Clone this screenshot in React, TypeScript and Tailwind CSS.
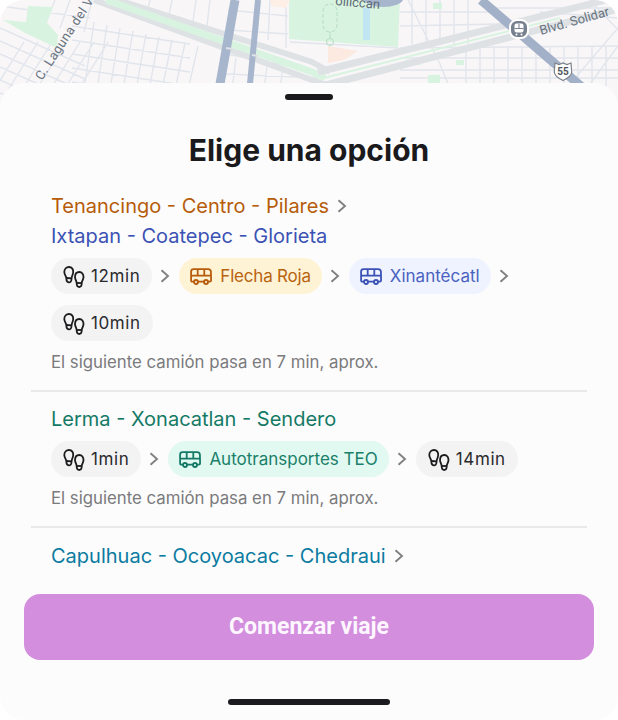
import React from "react";

const Foot = () => (
  <svg width="22" height="24" viewBox="0 0 22 24" fill="none" stroke="#1c1c1e" strokeWidth="1.800" className="shrink-0">
    <path d="M6 2c3 0 4.500 2.500 4.200 5.500-.2 2-1.400 3.500-1.600 5.500l-.2 2c-.2 1.600-1.300 2.500-2.700 2.300-1.300-.2-2.200-1.400-2.200-2.800l-.3-2C3 11 1.300 9.500 1.300 7 1.300 4 3.400 2 6 2Z" />
    <path d="M3.300 13l5.300.4" />
    <path d="M16.300 7c2.700 0 4.300 2.300 4.200 5.200-.1 2-1.400 3.300-1.700 5.300l-.2 2c-.2 1.500-1.100 2.500-2.400 2.500s-2.200-1-2.400-2.500l-.2-2c-.3-2-1.500-3.300-1.600-5.300C12 9.300 13.600 7 16.300 7Z" />
    <path d="M13.700 18h5.100" />
  </svg>
);

const Bus = ({ c, bg }: { c: string; bg: string }) => (
  <svg width="22" height="17" viewBox="0 0 22 17" fill="none" stroke={c} strokeWidth="1.800" strokeLinejoin="round" className="shrink-0">
    <path d="M3.500 1.200h14.700c1.500 0 2.500 1 2.700 2.400l.2 8.700c0 .8-.6 1.300-1.400 1.300H2.200c-.6 0-1.100-.5-1.100-1.100V3.700c0-1.400 1-2.500 2.400-2.500Z" />
    <path d="M1.200 7.700h19.800M7.700 1.300v6.400M14.300 1.300v6.400" />
    <circle cx="6" cy="14" r="2" fill={bg} />
    <circle cx="16" cy="14" r="2" fill={bg} />
  </svg>
);

const Chev = () => (
  <svg width="11" height="14" viewBox="0 0 11 14" fill="none" stroke="#808080" strokeWidth="1.900" className="shrink-0">
    <path d="M1.500 1.200L8 7l-6.500 5.800" />
  </svg>
);

const Walk = ({ t }: { t: string }) => (
  <span className="flex h-9 items-center gap-[6px] rounded-full bg-[#f3f3f4] pl-3 pr-3 pt-px text-[17px] tracking-[0.6px] text-[#2a2a2c]">
    <Foot />
    {t}
  </span>
);

const Route = ({ t, fg, bg, icon, track }: { t: string; fg: string; bg: string; icon: string; track: string }) => (
  <span className={`flex h-9 items-center gap-2 rounded-full px-[11px] pt-px text-[17px] ${track}`} style={{ color: fg, background: bg }}>
    <Bus c={icon} bg={bg} />
    {t}
  </span>
);

const thin: string[] = [];
// south-west diagonal grid
for (let i = 0; i < 6; i++) thin.push(`M0 ${28 + i * 13}L85 ${66 + i * 13}`);
for (let i = 0; i < 7; i++) thin.push(`M${i * 14 - 6} 90L${i * 14 + 24} 42`);
// left block grid
for (let i = 0; i < 9; i++) thin.push(`M${84 + i * 13} 90L${94 + i * 13} ${22 + i * 3}`);
for (let i = 0; i < 5; i++) thin.push(`M72 ${26 + i * 14}L${190} ${44 + i * 14}`);
// top-left
thin.push("M0 6L90 18", "M55 0L45 25", "M70 0L60 28", "M92 0L84 32", "M150 0L146 16", "M172 0L168 20", "M196 0L192 28", "M210 0L206 34");
// centre blocks
for (let i = 0; i < 4; i++) thin.push(`M${232 + i * 16} 90L${236 + i * 16} 58`);
thin.push("M226 54L290 66", "M226 74L320 78", "M228 10L288 16", "M228 30L288 34", "M270 0L268 40", "M286 0L286 48");
// upper middle-right
for (let i = 0; i < 5; i++) thin.push(`M${412 + i * 14} 0L${412 + i * 14} 44`);
thin.push("M400 12L490 12", "M400 26L500 24", "M408 0L440 64", "M440 64L448 84", "M490 8L618 8");
// lower right grid
for (let i = 0; i < 11; i++) thin.push(`M${466 + i * 14} 46L${466 + i * 14} 90`);
thin.push("M400 48L618 46", "M400 58L618 58", "M400 70L618 70", "M400 78L618 78");
thin.push("M618 28L570 84", "M618 46L590 84", "M540 12L618 18", "M590 0L618 30");

function MapView() {
  return (
    <div className="h-[110px] w-full overflow-hidden">
      <svg width="618" height="110" viewBox="0 0 618 110" className="block" fontFamily="Roboto, sans-serif">
        <rect width="618" height="110" fill="#f9f6f8" />
        <path d={thin.join("")} stroke="#e1e5ec" strokeWidth="1.400" fill="none" />
        <path d="M28 6L53 7L47 23L58 35L57 48L25 33L3 20L26 22Z" fill="#d9f3e1" />
        <path d="M289 0H400L398 47L289 39Z" fill="#d9f3e1" />
        <path d="M433 3H442V9H433ZM405 60H421V65H405ZM456 60H464V65H456ZM428 75H440V84H428Z" fill="#d9f3e1" />
        <path d="M270 0H290L286 8L272 6Z" fill="#fdeee6" />
        <path d="M363 8H370V40H363Z" fill="#bfe6f2" />
        <path d="M328 46L358 51L344 60L328 63Z" fill="#fce9df" />
        <path d="M290 42L398 48" stroke="#e1e5ec" strokeWidth="1.400" />
        <rect x="323" y="4" width="14" height="28" rx="7" fill="none" stroke="#b5dcc0" strokeDasharray="4 2" />
        <path d="M330 32V38" stroke="#b5dcc0" />
        <circle cx="330" cy="42" r="3.500" fill="none" stroke="#b5dcc0" />
        <path d="M118 0L312 62L330 72" stroke="#dee2e5" strokeWidth="6" fill="none" />
        <path d="M94 0L312 80L330 86" stroke="#dee2e5" strokeWidth="6" fill="none" />
        <path d="M106 0L312 72L325 78" stroke="#d9f3e1" strokeWidth="7" fill="none" />
        <path d="M318 72L630 -6" stroke="#dee2e5" strokeWidth="7" fill="none" />
        <path d="M322 86L630 6" stroke="#dee2e5" strokeWidth="7" fill="none" />
        <path d="M320 79L560 18" stroke="#d9f3e1" strokeWidth="2" fill="none" />
        <path d="M235 0L220 84" stroke="#a7b6cd" strokeWidth="9" fill="none" />
        <path d="M258 0L250 84" stroke="#a7b6cd" strokeWidth="6" fill="none" />
        <path d="M226 48L232 49M252 55L258 56" stroke="#dee2e5" strokeWidth="2" />
        <path d="M481 0L583 88" stroke="#a3b1c8" strokeWidth="9" fill="none" />
        <path d="M364 0A20 9 0 0 0 403 0Z" fill="#a7b6cd" />
        <text x="335" y="5" fontSize="13" fill="#5f6b76" transform="rotate(5 335 5)">olilccan</text>
        <text x="42" y="81" fontSize="13" fill="#69747f" letterSpacing=".4" transform="rotate(-57 42 81)">C. Laguna del Vo</text>
        <text x="541" y="35" fontSize="13" fill="#69747f" transform="rotate(-16 541 35)">Blvd. Solidar</text>
        <rect x="510" y="20" width="18" height="18" rx="7" fill="#76808e" stroke="#fff" strokeWidth="2" />
        <rect x="514.500" y="23.500" width="9" height="9" rx="2" fill="#fff" />
        <path d="M514.500 28.500H523.500M519 24V28.500" stroke="#76808e" />
        <circle cx="516.500" cy="34.500" r="1" fill="#fff" />
        <circle cx="521.500" cy="34.500" r="1" fill="#fff" />
        <path d="M555 63l4 1.500 4-1.500 4 1.500 4-1.500.7 9c0 4-4.700 6.500-8.700 8.500-4-2-8.700-4.500-8.700-8.500Z" fill="#fff" stroke="#7b828a" strokeWidth="1.200" />
        <text x="563" y="75" fontSize="10" textAnchor="middle" fontWeight="700" fill="#4e555d">55</text>
      </svg>
    </div>
  );
}

export default function App() {
  return (
    <div className="h-[720px] w-[618px] overflow-hidden bg-white font-['Inter',sans-serif]">
      <div className="flex h-full flex-col overflow-hidden rounded-[24px]">
        <MapView />
        <div className="-mt-[27px] flex flex-1 flex-col rounded-t-[24px] bg-[#fcfcfc]">
          <div className="mx-auto mt-[11px] h-[6px] w-[48px] rounded-full bg-[#1a1a1c]" />
          <h1 className="mt-[30px] text-center text-[30px] font-bold leading-[40px] text-[#1a1a1c]">Elige una opción</h1>
          <div className="mx-[31px] mt-[21px] flex flex-col">
            <div className="border-b-2 border-[#e9e9e9] px-5 pb-[18px]">
              <div className="flex h-[30px] items-center gap-[8px] text-[20px] text-[#b65c0a]">
                Tenancingo - Centro - Pilares <Chev />
              </div>
              <div className="flex h-[30px] items-center text-[20px] text-[#3b52b4]">Ixtapan - Coatepec - Glorieta</div>
              <div className="mt-[7px] flex flex-wrap items-center gap-x-[8px] gap-y-[11px]">
                <Walk t="12min" />
                <Chev />
                <Route t="Flecha Roja" fg="#b8640f" bg="#fff3d6" icon="#b65c0a" track="tracking-[-0.2px]" />
                <Chev />
                <Route t="Xinantécatl" fg="#4a62c0" bg="#eef3ff" icon="#3b52b4" track="tracking-[0px]" />
                <Chev />
                <Walk t="10min" />
              </div>
              <p className="mt-[11px] text-[16.800px] leading-[20px] text-[#7a7a7c]">El siguiente camión pasa en 7 min, aprox.</p>
            </div>
            <div className="border-b-2 border-[#e9e9e9] px-5 pb-[18px] pt-[12px]">
              <div className="flex h-[30px] items-center text-[20px] text-[#147a66]">Lerma - Xonacatlan - Sendero</div>
              <div className="mt-[7px] flex flex-wrap items-center gap-x-[8px]">
                <Walk t="1min" />
                <Chev />
                <Route t="Autotransportes TEO" fg="#1a8069" bg="#e1f9f1" icon="#147a66" track="tracking-[0px]" />
                <Chev />
                <Walk t="14min" />
              </div>
              <p className="mt-[11px] text-[16.800px] leading-[20px] text-[#7a7a7c]">El siguiente camión pasa en 7 min, aprox.</p>
            </div>
            <div className="flex h-[56px] items-center gap-[8px] px-5 text-[20px] text-[#0b7ba1]">
              Capulhuac - Ocoyoacac - Chedraui <Chev />
            </div>
          </div>
          <button className="mx-6 mt-[10px] h-[66px] rounded-[16px] bg-[#d38ede] font-['Roboto',sans-serif] text-[23px] font-bold text-[#fdf6fe]">
            Comenzar viaje
          </button>
          <div className="mx-auto mt-[39px] h-[6px] w-[162px] rounded-full bg-[#1c1c20]" />
        </div>
      </div>
    </div>
  );
}
